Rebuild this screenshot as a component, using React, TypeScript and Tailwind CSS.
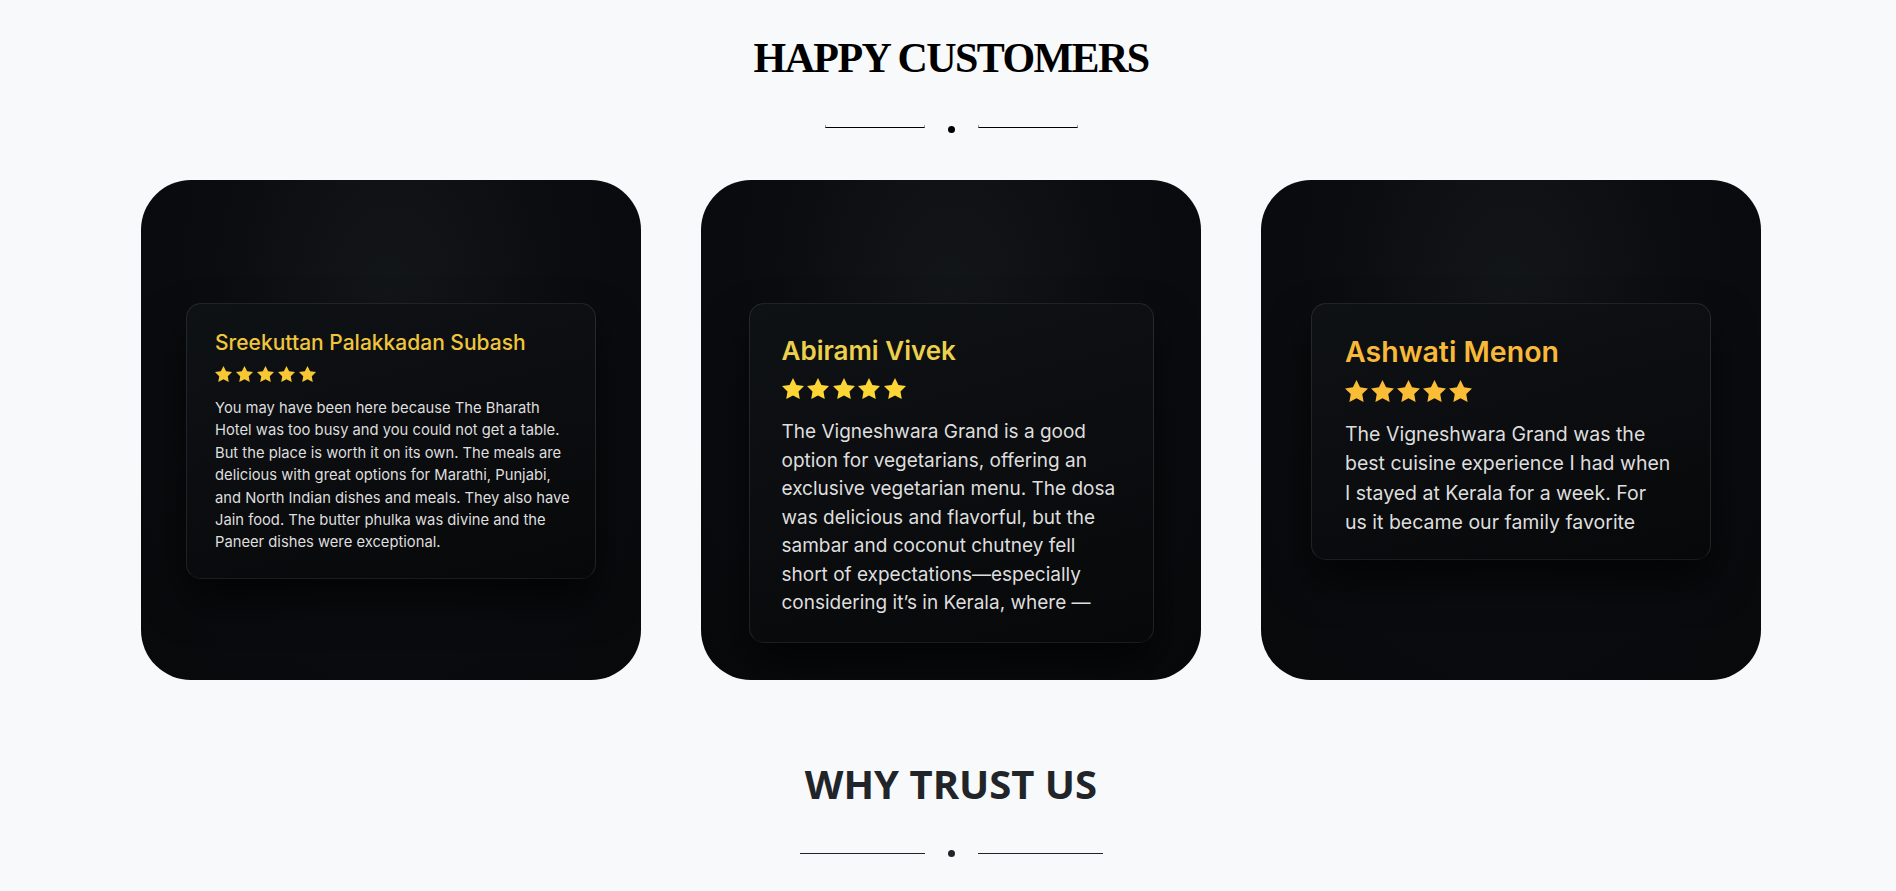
import React from "react";

type Review = {
  name: string;
  lines: string[];
  box: string;
  nameCls: string;
  starsCls: string;
  starW: number;
  starH: number;
  starColor: string;
  bodyCls: string;
};

const reviews: Review[] = [
  {
    name: "Sreekuttan Palakkadan Subash",
    lines: [
      "You may have been here because The Bharath",
      "Hotel was too busy and you could not get a table.",
      "But the place is worth it on its own. The meals are",
      "delicious with great options for Marathi, Punjabi,",
      "and North Indian dishes and meals. They also have",
      "Jain food. The butter phulka was divine and the",
      "Paneer dishes were exceptional.",
    ],
    box: "w-[410px] pl-[28px] pr-[12px] pt-[26px] pb-[24px]",
    nameCls: "text-[21px] leading-[25px] font-medium text-[#f0c53c]",
    starsCls: "mt-[11px] gap-[4px]",
    starW: 17,
    starH: 16,
    starColor: "#f7c734",
    bodyCls: "mt-[15px] text-[14.75px] leading-[22.4px]",
  },
  {
    name: "Abirami Vivek",
    lines: [
      "The Vigneshwara Grand is a good",
      "option for vegetarians, offering an",
      "exclusive vegetarian menu. The dosa",
      "was delicious and flavorful, but the",
      "sambar and coconut chutney fell",
      "short of expectations—especially",
      "considering it’s in Kerala, where —",
    ],
    box: "w-[405px] pl-[32px] pr-[20px] pt-[31px] pb-[24px]",
    nameCls: "text-[26px] leading-[31px] font-semibold text-[#ecd04b]",
    starsCls: "mt-[12px] gap-[3.5px]",
    starW: 22,
    starH: 21,
    starColor: "#fdd535",
    bodyCls: "mt-[19px] text-[19px] leading-[28.5px]",
  },
  {
    name: "Ashwati Menon",
    lines: [
      "The Vigneshwara Grand was the",
      "best cuisine experience I had when",
      "I stayed at Kerala for a week. For",
      "us it became our family favorite",
    ],
    box: "w-[400px] pl-[33px] pr-[20px] pt-[30px] pb-[22px]",
    nameCls: "text-[28.5px] leading-[35px] font-semibold text-[#f8b938]",
    starsCls: "mt-[11px] gap-[3px]",
    starW: 23,
    starH: 22,
    starColor: "#fbbd35",
    bodyCls: "mt-[18px] text-[19.5px] leading-[29.25px]",
  },
];

function Star({ w, h, color }: { w: number; h: number; color: string }) {
  return (
    <svg width={w} height={h} viewBox="2 2 20 19" preserveAspectRatio="none">
      <path
        d="M12 2l3.09 6.26L22 9.27l-5 4.87 1.18 6.88L12 17.77l-6.18 3.25L7 14.14 2 9.27l6.91-1.01L12 2z"
        fill={color}
      />
    </svg>
  );
}

function Divider({ width, thin }: { width: string; thin?: boolean }) {
  const line = thin
    ? `${width} h-[3px] border-b border-b-black border-x border-x-gray-400`
    : `${width} h-px bg-[#212529]`;
  return (
    <div className="flex items-start justify-center gap-[23px]">
      <div className={line} />
      <div className={`w-[7px] h-[7px] rounded-full ${thin ? "mt-[1px] bg-black" : "-mt-[3px] bg-[#212529]"}`} />
      <div className={line} />
    </div>
  );
}

export default function App() {
  return (
    <div className="min-h-screen bg-[#f8f9fa] pl-[6px] overflow-hidden">
      <section className="pt-[37px] flex flex-col items-center">
        <h2 className="font-['Liberation_Serif',serif] font-bold text-[42px] leading-none tracking-[-1.6px] text-black">
          HAPPY CUSTOMERS
        </h2>
        <div className="mt-[46px]">
          <Divider width="w-[100px]" thin />
        </div>

        <div className="mt-[47px] flex justify-center gap-[60px] font-['Inter',sans-serif]">
          {reviews.map((r) => (
            <div
              key={r.name}
              className="w-[500px] h-[500px] rounded-[50px] overflow-hidden flex justify-center items-start pt-[123px] bg-[radial-gradient(ellipse_at_50%_24%,#131619_0%,#0b0c0f_50%,#08090b_100%)]"
            >
              <div
                className={`${r.box} rounded-[15px] border border-white/10 border-b-white/5 bg-[linear-gradient(165deg,#0f1215_0%,#07080a_100%)] shadow-[0_22px_40px_rgba(0,0,0,0.65)]`}
              >
                <h3 className={r.nameCls}>{r.name}</h3>
                <div className={`flex ${r.starsCls}`}>
                  {[0, 1, 2, 3, 4].map((i) => (
                    <Star key={i} w={r.starW} h={r.starH} color={r.starColor} />
                  ))}
                </div>
                <p className={`${r.bodyCls} text-[#dedede] whitespace-nowrap`}>
                  {r.lines.map((l, i) => (
                    <React.Fragment key={i}>
                      {l}
                      {i < r.lines.length - 1 && <br />}
                    </React.Fragment>
                  ))}
                </p>
              </div>
            </div>
          ))}
        </div>
      </section>

      <section className="mt-[80px] flex flex-col items-center">
        <h2 className="font-['Open_Sans',sans-serif] font-bold text-[40px] leading-[48px] text-[#212529]">
          WHY TRUST US
        </h2>
        <div className="mt-[45px]">
          <Divider width="w-[125px]" />
        </div>
      </section>
    </div>
  );
}
